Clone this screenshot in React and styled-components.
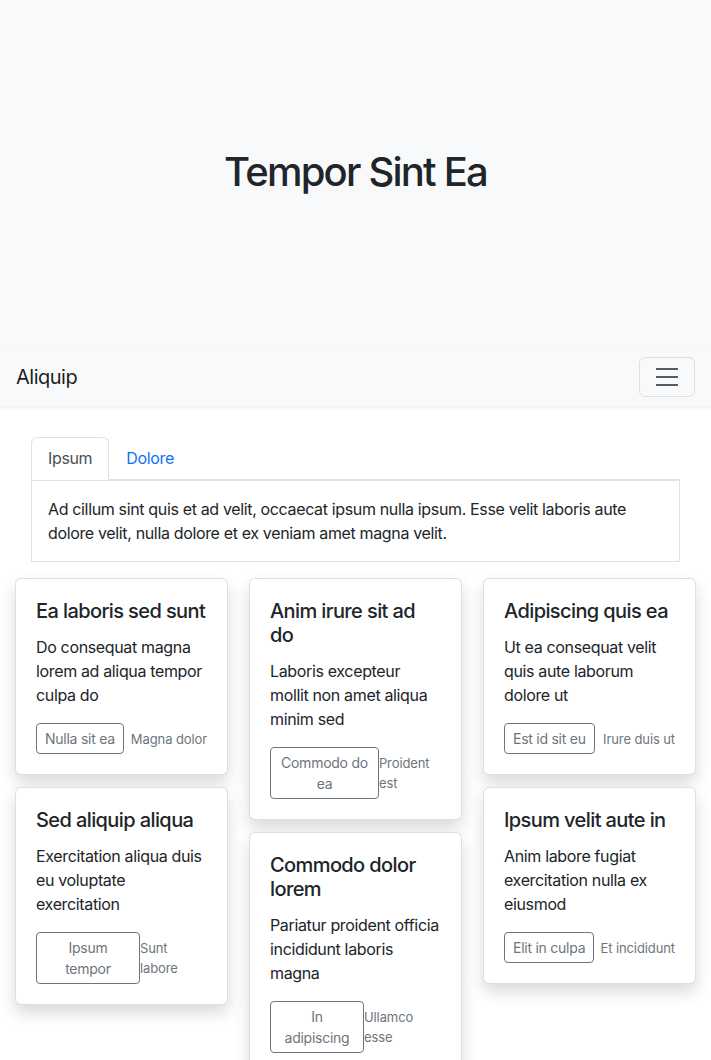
import React from 'react';
import styled, { createGlobalStyle } from 'styled-components';

const GlobalStyle = createGlobalStyle`
  * { box-sizing: border-box; }
  body {
    margin: 0;
    font-family: Inter, "Noto Sans", "Liberation Sans", sans-serif;
    font-size: 16px;
    line-height: 1.5;
    color: #212529;
    background: #fff;
  }
`;

const Hero = styled.header`
  height: 348px;
  background-color: #f8f9fa;
  display: flex;
  align-items: center;
  justify-content: center;
  padding-bottom: 4px;

  & > h1 {
    margin: 0;
    font-size: 40px;
    font-weight: 500;
    line-height: 1.2;
    letter-spacing: -1.8px;
  }
`;

const Navbar = styled.nav`
  display: flex;
  justify-content: space-between;
  align-items: center;
  height: 58px;
  padding: 0 16px;
  background-color: #f8f9fa;
  box-shadow: 0 2px 4px rgba(0, 0, 0, 0.075);
  position: relative;
  z-index: 2;
`;

const Brand = styled.a`
  font-size: 20px;
  color: rgba(0, 0, 0, 0.9);
  text-decoration: none;
  letter-spacing: -0.5px;
`;

const Toggler = styled.button`
  display: flex;
  align-items: center;
  justify-content: center;
  width: 56px;
  height: 40px;
  padding: 0;
  background: transparent;
  border: 1px solid rgba(0, 0, 0, 0.1);
  border-radius: 6px;

  & > svg { display: block; }
`;

const Main = styled.main`
  padding: 0 15px;
`;

const TabsSection = styled.section`
  margin: 31px 16px 16px;
`;

const TabList = styled.div`
  display: flex;
  border-bottom: 1px solid #dee2e6;
`;

const Tab = styled.a`
  display: block;
  padding: 8px 16px 9px;
  margin-bottom: -1px;
  font-size: 16px;
  text-decoration: none;
  color: ${p => (p.$active ? '#495057' : '#0d6efd')};
  background: ${p => (p.$active ? '#fff' : 'transparent')};
  border: 1px solid ${p => (p.$active ? '#dee2e6' : 'transparent')};
  border-bottom-color: ${p => (p.$active ? '#fff' : 'transparent')};
  border-radius: 6px 6px 0 0;
  letter-spacing: -0.35px;
`;

const TabPanel = styled.div`
  padding: 16px;
  border: 1px solid #dee2e6;

  & > p { margin: 0; letter-spacing: -0.35px; }
`;

const Grid = styled.div`
  display: grid;
  grid-template-columns: 1fr 1fr 1fr;
  column-gap: 21px;
  align-items: start;
`;

const Column = styled.div`
  display: flex;
  flex-direction: column;
  gap: 12px;
`;

const Card = styled.div`
  padding: 20px;
  background: #fff;
  border: 1px solid rgba(0, 0, 0, 0.125);
  border-radius: 6px;
  box-shadow: 0 8px 16px rgba(0, 0, 0, 0.15);
`;

const CardTitle = styled.h5`
  margin: 0 0 12px;
  font-size: 20px;
  font-weight: 500;
  line-height: 1.2;
  letter-spacing: -0.6px;
`;

const CardText = styled.p`
  margin: 0 0 16px;
  letter-spacing: -0.35px;
`;

const CardFooter = styled.div`
  display: flex;
  justify-content: space-between;
  align-items: center;
`;

const OutlineButton = styled.button`
  padding: 4px 8px;
  font-family: inherit;
  font-size: 14px;
  line-height: 1.5;
  letter-spacing: -0.25px;
  color: #6c757d;
  background: transparent;
  border: 1px solid #6c757d;
  border-radius: 4px;
  text-align: center;
`;

const Muted = styled.small`
  font-size: 13px;
  line-height: 20px;
  letter-spacing: -0.1px;
  color: #6c757d;
`;

const cards = [
  [
    {
      title: 'Ea laboris sed sunt',
      text: 'Do consequat magna lorem ad aliqua tempor culpa do',
      action: 'Nulla sit ea',
      note: 'Magna dolor',
    },
    {
      title: 'Sed aliquip aliqua',
      text: 'Exercitation aliqua duis eu voluptate exercitation',
      action: 'Ipsum tempor',
      note: 'Sunt labore',
    },
  ],
  [
    {
      title: 'Anim irure sit ad do',
      text: 'Laboris excepteur mollit non amet aliqua minim sed',
      action: 'Commodo do ea',
      note: 'Proident est',
    },
    {
      title: 'Commodo dolor lorem',
      text: 'Pariatur proident officia incididunt laboris magna',
      action: 'In adipiscing',
      note: 'Ullamco esse',
    },
  ],
  [
    {
      title: 'Adipiscing quis ea',
      text: 'Ut ea consequat velit quis aute laborum dolore ut',
      action: 'Est id sit eu',
      note: 'Irure duis ut',
    },
    {
      title: 'Ipsum velit aute in',
      text: 'Anim labore fugiat exercitation nulla ex eiusmod',
      action: 'Elit in culpa',
      note: 'Et incididunt',
    },
  ],
];

const MenuIcon = () => (
  <svg width="30" height="30" viewBox="0 0 30 30">
    <path
      stroke="rgba(33, 37, 41, 0.75)"
      strokeLinecap="butt"
      strokeMiterlimit="10"
      strokeWidth="2"
      d="M4 7h22M4 15h22M4 23h22"
    />
  </svg>
);

const App = () => (
  <>
    <GlobalStyle />
    <Hero>
      <h1>Tempor Sint Ea</h1>
    </Hero>
    <Navbar>
      <Brand href="#">Aliquip</Brand>
      <Toggler aria-label="Toggle navigation">
        <MenuIcon />
      </Toggler>
    </Navbar>
    <Main>
      <TabsSection>
        <TabList>
          <Tab href="#" $active>Ipsum</Tab>
          <Tab href="#">Dolore</Tab>
        </TabList>
        <TabPanel>
          <p>
            Ad cillum sint quis et ad velit, occaecat ipsum nulla ipsum. Esse velit laboris aute
            dolore velit, nulla dolore et ex veniam amet magna velit.
          </p>
        </TabPanel>
      </TabsSection>
      <Grid>
        {cards.map((column, i) => (
          <Column key={i}>
            {column.map(card => (
              <Card key={card.title}>
                <CardTitle>{card.title}</CardTitle>
                <CardText>{card.text}</CardText>
                <CardFooter>
                  <OutlineButton>{card.action}</OutlineButton>
                  <Muted>{card.note}</Muted>
                </CardFooter>
              </Card>
            ))}
          </Column>
        ))}
      </Grid>
    </Main>
  </>
);

export default App;
